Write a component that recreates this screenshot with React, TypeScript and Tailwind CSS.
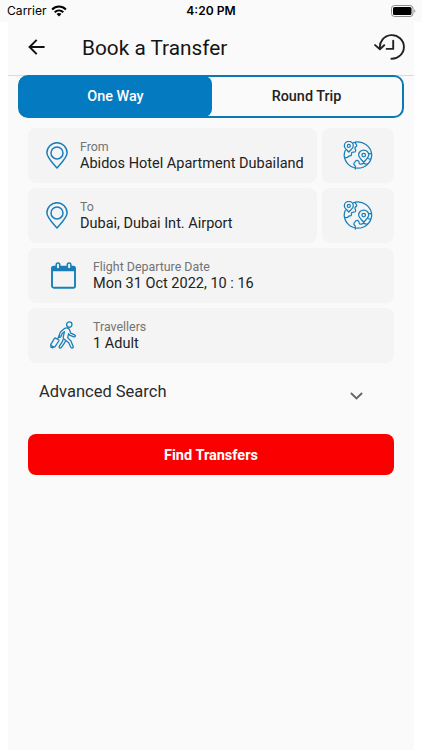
import type { ReactNode } from "react";

const BLUE = "#1a7fb8";

function WifiIcon() {
  return (
    <svg width="16" height="12" viewBox="0 0 16 12" fill="none" stroke="#000" strokeWidth="2">
      <path d="M1.1 4.5C5 .5 11 .5 14.9 4.5" />
      <path d="M3.7 7.2c2.5-2.4 6.1-2.4 8.6 0" />
      <path d="M8 11.4 5.6 9c1.3-1.2 3.5-1.2 4.8 0z" fill="#000" stroke="none" />
    </svg>
  );
}

function BatteryIcon() {
  return (
    <svg width="25" height="12" viewBox="0 0 25 12" fill="none">
      <rect x=".5" y=".5" width="21.5" height="11" rx="3" stroke="#8c8c8c" />
      <rect x="2" y="2" width="18.5" height="8" rx="1.6" fill="#000" />
      <path d="M23.3 4.2c1.4.5 1.4 3.1 0 3.6z" fill="#8c8c8c" />
    </svg>
  );
}

function BackIcon() {
  return (
    <svg className="-mt-[3px]" width="18" height="16" viewBox="0 0 18 16" fill="none" stroke="#111" strokeWidth="2">
      <path d="M16.600 8H2M8.700.9 1.600 8l7.100 7.100" />
    </svg>
  );
}

function HistoryIcon() {
  return (
    <svg className="-mt-[3px]" width="32" height="26" viewBox="0 0 32 26" fill="none" stroke="#222" strokeWidth="1.9" strokeLinecap="round" strokeLinejoin="round">
      <path d="M6 14.400A12 11.8 0 1 1 17.400 24.700" />
      <path d="M1.100 11.100 5.900 15.200 10.200 11.200" />
      <path d="M19.2 6.8V14.9H12.600" />
    </svg>
  );
}

function PinIcon() {
  return (
    <svg className="-mt-px -ml-[.5px] mr-[.5px]" width="22" height="27" viewBox="0 0 22 27" fill="none" stroke={BLUE} strokeWidth="1.500" strokeLinejoin="round">
      <path d="M11 26C8.2 22.5.9 16 .9 10.8a10.1 10.1 0 0 1 20.2 0C21.1 16 13.8 22.5 11 26z" />
      <circle cx="11" cy="10.9" r="6" />
    </svg>
  );
}

function GlobeIcon() {
  return (
    <svg width="30" height="29" viewBox="0 0 30 29" fill="none" stroke={BLUE} strokeWidth="1.25" strokeLinejoin="round" strokeLinecap="round">
      <path d="M10.2 1.8C19.4-1.4 28.7 5.4 28.7 14.6a13.8 13.8 0 0 1-27.5 0c0-2 .4-3.8 1.1-5.4" />
      <path d="M5.8 11.2C4.3 9 1.3 7.5 1.3 4.9a4.5 4.5 0 0 1 9 0c0 2.600-3 4.100-4.500 6.300z" />
      <circle cx="5.8" cy="4.9" r="1.5" />
      <path d="M20.700 21.400c-1.700-2.700-5.100-4.300-5.100-7.300a5.100 5.100 0 0 1 10.200 0c0 3-3.400 4.600-5.100 7.300z" />
      <circle cx="20.7" cy="14.1" r="1.8" />
      <path d="M12.500 1.300c-.7 1.700 1.500 1.900 1.200 3.500-.3 1.300-2 1-1.800 2.300.2 1.500 1.600 2.200.4 3.500-1 1-2.500-.1-3.400.8-.9 1 .1 2.300-.8 3.100-.8.8-2.200.1-2.800 1.100-.7 1.200-2.400 1.200-3.600.7" />
      <path d="M25.600 12.500h3M24.800 17.500c1 .2 1.400.8 2.800.4" />
      <path d="M12.300 28v-2.800c0-1.100-1.500-1-1.500-2.300s1.100-1.500 1.500-2.400c.5-1.300 2.500-1.500 3.300-.4.800 1 .1 2.200 1.200 2.900 1.200.8 2.500-.6 3.900-.6 1.600 0 2.200 1.400 3.900.5" />
    </svg>
  );
}

function CalendarIcon() {
  return (
    <svg className="-mr-px" width="26" height="27" viewBox="0 0 26 27" fill="none">
      <rect x="1" y="4.700" width="23" height="21" rx="1.800" stroke={BLUE} strokeWidth="1.900" />
      <path d="M.6 5.600Q.6 4 2.500 4h20q1.900 0 1.900 1.600V9.200H.6z" fill={BLUE} />
      <rect x="5.200" y=".9" width="3.600" height="6.200" rx="1.800" fill="#e8f0f5" stroke={BLUE} strokeWidth="1.500" />
      <rect x="16.300" y=".9" width="3.600" height="6.200" rx="1.800" fill="#e8f0f5" stroke={BLUE} strokeWidth="1.500" />
    </svg>
  );
}

function TravellerIcon() {
  return (
    <svg className="-mt-px -ml-px mr-px" width="27" height="28" viewBox="0 0 27 28" fill="none" stroke={BLUE} strokeWidth="1.3" strokeLinejoin="round" strokeLinecap="round">
      <circle cx="19.300" cy="3.600" r="2.700" />
      <path d="M14.800 7.300c1.700-.8 3.900-.4 4.600 1.200l1.400 3.700 3.800 1.700c1.300.7.700 2.300-.7 2l-4.300-1.700-1-1.500-.9 4.200 3.100 2.900 2.300 5.400c.6 1.700-1.500 2.400-2.300 1l-2.100-4.500-4.700-3.700c-.8-.7-.9-1.400-.7-2.400l1.200-4.900-2.200 1.600-1.300 3.300c-.6 1.300-2.300.7-2-.6l1.400-4.100z" />
      <path d="m13.200 18.300-1 2.600-2.800 4.200c-.9 1.600.9 2.600 2 1.200l3.200-4.500.8-1.800" />
      <path d="m9.800 14.200-2 3.200" />
      <path d="m5.500 17.100 3 1.700c.5.300.6.700.3 1.200l-3.900 5.900-1.300.2-2.500-1.600c-.4-.3-.5-.7-.2-1.200l3.600-5.900c.3-.4.600-.5 1-.3z" />
      <path d="m1 24.300-.1 1.800 1.700.7.900-1" />
    </svg>
  );
}

function FieldText({ label, value }: { label: string; value: string }) {
  return (
    <div className="-mt-px flex flex-col whitespace-nowrap">
      <span className="mb-[2px] text-[12.4px] leading-[15px] text-[#737373]">{label}</span>
      <span className="text-[14.5px] leading-4 text-[#222]">{value}</span>
    </div>
  );
}

function Card({ className, children }: { className: string; children: ReactNode }) {
  return <div className={`flex h-[55px] items-center rounded-lg bg-[#f4f4f4] ${className}`}>{children}</div>;
}

function PlaceRow({ label, value }: { label: string; value: string }) {
  return (
    <div className="flex gap-[5px]">
      <Card className="w-[289px] gap-3 pl-[18px]">
        <PinIcon />
        <FieldText label={label} value={value} />
      </Card>
      <Card className="w-[72px] justify-center">
        <GlobeIcon />
      </Card>
    </div>
  );
}

export default function App() {
  return (
    <div className="flex h-[750px] w-[422px] flex-col overflow-hidden bg-white font-[Roboto,sans-serif]">
      <div className="grid h-[22px] shrink-0 grid-cols-3 items-center bg-[#fafafa] pl-[7px] pr-[6px] font-[Inter,sans-serif] text-black">
        <div className="flex items-center gap-[4px] text-[12.1px]">
          <span>Carrier</span>
          <WifiIcon />
        </div>
        <span className="-ml-px text-center text-[12.1px] font-semibold">4:20 PM</span>
        <div className="flex justify-end">
          <BatteryIcon />
        </div>
      </div>

      <main className="ml-[8px] flex w-[406px] flex-1 flex-col bg-[#fafafa]">
        <header className="flex h-[54px] items-center border-b border-[#d8dadc] pl-5 pr-[8px]">
          <BackIcon />
          <h1 className="ml-[36px] flex-1 text-[20.8px] text-[#151515]">Book a Transfer</h1>
          <HistoryIcon />
        </header>

        <div className="-mt-px ml-[10px] flex h-[43px] w-[386px] rounded-[10px] border-2 border-[#0c78b4] text-[14.4px] font-medium">
          <button className="-my-px -ml-px w-[193px] rounded-lg bg-[#047bc1] text-white">One Way</button>
          <button className="flex-1 pr-px text-[#222]">Round Trip</button>
        </div>

        <section className="ml-5 mt-[10px] flex w-[366px] flex-col gap-[5px]">
          <PlaceRow label="From" value="Abidos Hotel Apartment Dubailand" />
          <PlaceRow label="To" value="Dubai, Dubai Int. Airport" />
          <Card className="gap-[17px] pl-[23px]">
            <CalendarIcon />
            <FieldText label="Flight Departure Date" value="Mon 31 Oct 2022, 10 : 16" />
          </Card>
          <Card className="gap-[15px] pl-[23px]">
            <TravellerIcon />
            <FieldText label="Travellers" value="1 Adult" />
          </Card>
        </section>

        <div className="ml-[31px] mt-[18px] flex h-[22px] w-[324px] items-center justify-between text-[16.5px] text-[#2b2b2b]">
          <span>Advanced Search</span>
          <svg className="mt-[8px]" width="13" height="8" viewBox="0 0 13 8" fill="none" stroke="#666" strokeWidth="1.900">
            <path d="m.9 1 5.600 5.500L12.100 1" />
          </svg>
        </div>

        <button className="ml-5 mt-[31px] h-[41px] w-[366px] rounded-lg bg-[#fb0000] pt-[2px] text-[14.5px] font-bold text-white">
          Find Transfers
        </button>
      </main>
    </div>
  );
}
